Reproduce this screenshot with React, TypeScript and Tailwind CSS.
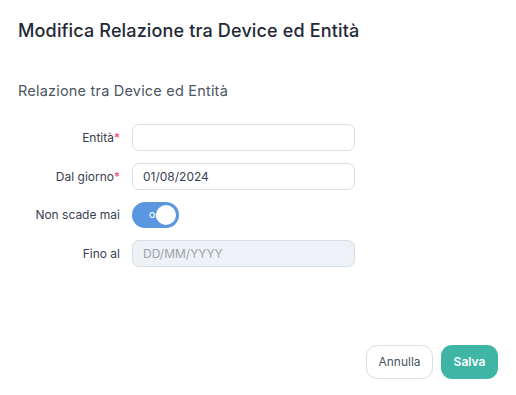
import React from "react";

export default function App() {
  return (
    <div className="w-[516px] h-[395px] bg-white relative" style={{ fontFamily: "Inter, 'Noto Sans', sans-serif" }}>
      <div className="pl-[18px] pt-[19px]">
        <h1 className="text-[18px] leading-[24px] font-medium tracking-[0.15px] text-[#1f2937]">Modifica Relazione tra Device ed Entità</h1>
        <h2 className="mt-[38px] text-[14.5px] leading-[20px] tracking-[0.2px] text-[#4b5563]">Relazione tra Device ed Entità</h2>
      </div>
      <div className="mt-[23px] flex flex-col gap-[12px]">
        <div className="flex items-center">
          <label className="w-[120px] text-right text-[12px] text-[#374151]">Entità<span className="text-[#f43f5e]">*</span></label>
          <div className="ml-[12px] w-[223px] h-[27px] border border-[#d8dee8] rounded-[7px] bg-white"></div>
        </div>
        <div className="flex items-center">
          <label className="w-[120px] text-right text-[12px] text-[#374151]">Dal giorno<span className="text-[#f43f5e]">*</span></label>
          <div className="ml-[12px] w-[223px] h-[27px] border border-[#d8dee8] rounded-[7px] bg-white flex items-center px-[10px] text-[12px] text-[#374151]">01/08/2024</div>
        </div>
        <div className="flex items-center">
          <label className="w-[120px] text-right text-[12px] text-[#374151]">Non scade mai</label>
          <div className="ml-[12px] w-[47px] h-[26px] rounded-full bg-[#5b96e0] relative flex items-center">
            <span className="absolute left-[17px] text-[8px] font-semibold text-white">On</span>
            <span className="absolute right-[3px] w-[20px] h-[20px] rounded-full bg-white"></span>
          </div>
        </div>
        <div className="flex items-center">
          <label className="w-[120px] text-right text-[12px] text-[#374151]">Fino al</label>
          <div className="ml-[12px] w-[223px] h-[27px] border border-[#d8dee8] rounded-[7px] bg-[#eef1f5] flex items-center px-[10px] text-[12px] text-[#9ca3af]">DD/MM/YYYY</div>
        </div>
      </div>
      <div className="absolute right-[18px] top-[345px] flex gap-[8px]">
        <button className="h-[34px] w-[67px] rounded-[11px] border border-[#d8dee8] bg-white text-[12px] text-[#4b5563]">Annulla</button>
        <button className="h-[34px] w-[57px] rounded-[11px] bg-[#3fb5a6] text-[12px] font-semibold text-white">Salva</button>
      </div>
    </div>
  );
}
